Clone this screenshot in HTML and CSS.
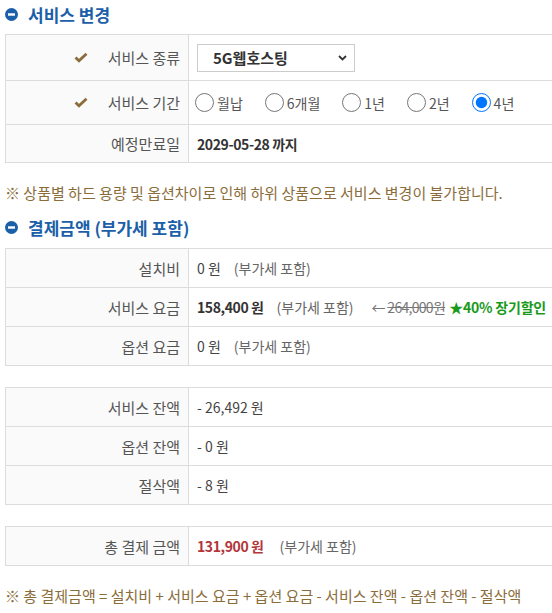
FILE: index.html
```html
<!DOCTYPE html>
<html>
<head>
    <title>서비스 변경</title>
    <link rel="stylesheet" href="styles.css">
</head>
<body>
<div class="page">
    <h2 class="title first">
        <svg class="minus" width="13" height="13" viewBox="0 0 13 13"><circle cx="6.5" cy="6.5" r="6.5" fill="#1b5fa9"/><rect x="3" y="5.3" width="7" height="2.4" fill="#fff"/></svg>
        서비스 변경
    </h2>
    <div class="box">
        <div class="row r1">
            <div class="th">
                <svg class="check" width="14" height="11" viewBox="0 0 14 11"><polyline points="1.5,5.5 5,8.8 12.5,1.8" fill="none" stroke="#8a6d3b" stroke-width="2.8"/></svg>
                서비스 종류
            </div>
            <div class="td">
                <div class="select">
                    <select>
                        <option>5G웹호스팅</option>
                    </select>
                    <svg class="arrow" width="9" height="6" viewBox="0 0 9 6"><polyline points="1,1 4.5,4.5 8,1" fill="none" stroke="#333" stroke-width="1.8"/></svg>
                </div>
            </div>
        </div>
        <div class="row r2">
            <div class="th">
                <svg class="check" width="14" height="11" viewBox="0 0 14 11"><polyline points="1.5,5.5 5,8.8 12.5,1.8" fill="none" stroke="#8a6d3b" stroke-width="2.8"/></svg>
                서비스 기간
            </div>
            <div class="td radios">
                <label><input type="radio" name="term">월납</label>
                <label><input type="radio" name="term">6개월</label>
                <label><input type="radio" name="term">1년</label>
                <label><input type="radio" name="term">2년</label>
                <label><input type="radio" name="term" checked>4년</label>
            </div>
        </div>
        <div class="row r3">
            <div class="th">예정만료일</div>
            <div class="td"><b class="num">2029-05-28 까지</b></div>
        </div>
    </div>

    <p class="note">※ 상품별 하드 용량 및 옵션차이로 인해 하위 상품으로 서비스 변경이 불가합니다.</p>

    <h2 class="title">
        <svg class="minus" width="13" height="13" viewBox="0 0 13 13"><circle cx="6.5" cy="6.5" r="6.5" fill="#1b5fa9"/><rect x="3" y="5.3" width="7" height="2.4" fill="#fff"/></svg>
        결제금액 (부가세 포함)
    </h2>
    <div class="box">
        <div class="row">
            <div class="th">설치비</div>
            <div class="td">0 원<span class="vat">(부가세 포함)</span></div>
        </div>
        <div class="row">
            <div class="th">서비스 요금</div>
            <div class="td"><b class="num">158,400 원</b><span class="vat">(부가세 포함)</span><span class="old">← <s>264,000원</s></span><b class="sale">★40% 장기할인</b></div>
        </div>
        <div class="row">
            <div class="th">옵션 요금</div>
            <div class="td">0 원<span class="vat">(부가세 포함)</span></div>
        </div>
    </div>

    <div class="box gap">
        <div class="row">
            <div class="th">서비스 잔액</div>
            <div class="td">- 26,492 원</div>
        </div>
        <div class="row">
            <div class="th">옵션 잔액</div>
            <div class="td">- 0 원</div>
        </div>
        <div class="row">
            <div class="th">절삭액</div>
            <div class="td">- 8 원</div>
        </div>
    </div>

    <div class="box gap">
        <div class="row">
            <div class="th">총 결제 금액</div>
            <div class="td"><b class="num total">131,900 원</b><span class="vat wide">(부가세 포함)</span></div>
        </div>
    </div>

    <p class="note">※ 총 결제금액 = 설치비 + 서비스 요금 + 옵션 요금 - 서비스 잔액 - 옵션 잔액 - 절삭액</p>
</div>
</body>
</html>
```

FILE: styles.css
```css
body {
    margin: 0;
    font-family: "Noto Sans CJK KR", "Noto Sans", sans-serif;
    font-size: 14px;
    color: #444;
}
.page {
    padding-left: 5px;
    overflow: hidden;
}
.title {
    display: flex;
    align-items: center;
    margin: 10px 0 7px;
    height: 28px;
    font-size: 17px;
    font-weight: bold;
    color: #1b5fa9;
}
.title.first {
    margin-top: 0;
    margin-bottom: 6px;
}
.minus {
    margin-right: 10px;
}
.box {
    width: 560px;
    border-top: 1px solid #dcdcdc;
    border-left: 1px solid #dcdcdc;
}
.box.gap {
    margin-top: 21px;
}
.row {
    display: flex;
    height: 39px;
    box-sizing: border-box;
    border-bottom: 1px solid #dcdcdc;
}
.row.r1 { height: 46px; }
.row.r2 { height: 44px; }
.row.r3 { height: 38px; }
.th {
    width: 183px;
    box-sizing: border-box;
    border-right: 1px solid #dcdcdc;
    background-color: #fafafa;
    display: flex;
    justify-content: flex-end;
    align-items: center;
    padding-right: 8px;
    font-size: 15px;
    color: #555;
}
.check {
    margin-right: 20px;
}
.td {
    flex: 1;
    display: flex;
    align-items: center;
    padding-left: 8px;
    white-space: nowrap;
}
.td b {
    color: #333;
}
.num {
    letter-spacing: -0.4px;
}
.select {
    position: relative;
    width: 158px;
    height: 28px;
}
.select select {
    appearance: none;
    width: 100%;
    height: 100%;
    border: 1px solid #ccc;
    border-radius: 0;
    background: #fff;
    padding: 0 0 0 15px;
    font-family: inherit;
    font-size: 15px;
    font-weight: bold;
    color: #333;
}
.arrow {
    position: absolute;
    right: 8px;
    top: 11px;
}
.radios label {
    display: flex;
    align-items: center;
    margin-right: 24px;
    font-size: 14px;
    color: #555;
}
.radios input {
    width: 19px;
    height: 19px;
    margin: 0 3px 0 -2px;
}
.vat {
    margin-left: 13px;
    color: #666;
}
.vat.wide {
    margin-left: 16px;
}
.old {
    margin-left: 18px;
    letter-spacing: -0.7px;
    color: #777;
}
.old s {
    color: #777;
}
.td b.sale {
    margin-left: 4px;
    letter-spacing: -0.2px;
    color: #1a9a1a;
}
.td b.total {
    color: #b3363c;
}
.note {
    margin: 20px 0 0;
    line-height: 20px;
    font-size: 15px;
    color: #8a6d3b;
}
```
